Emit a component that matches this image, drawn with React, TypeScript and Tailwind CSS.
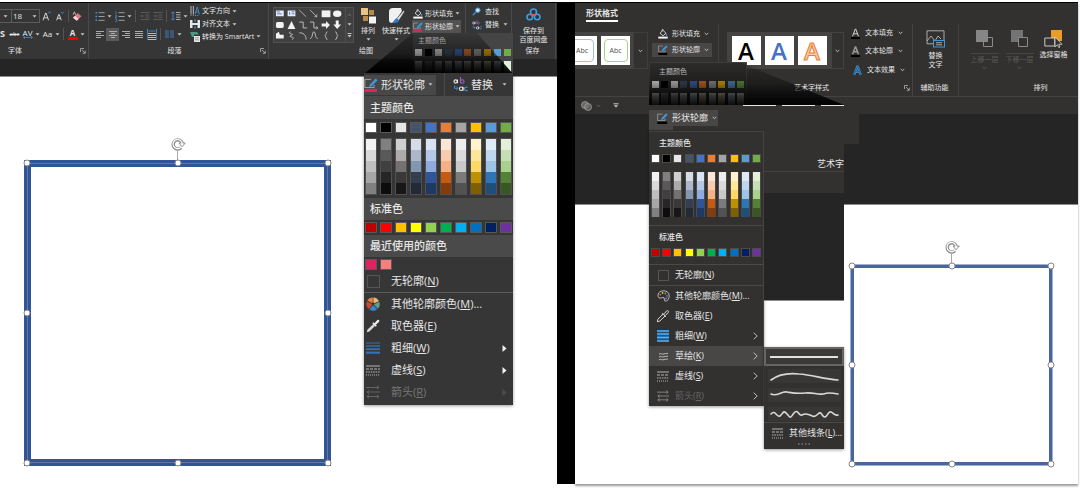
import type { ReactNode } from 'react'

const THEME = [
  ['#ffffff', '#f2f2f2', '#d9d9d9', '#bfbfbf', '#a6a6a6', '#808080'],
  ['#000000', '#808080', '#595959', '#404040', '#262626', '#0d0d0d'],
  ['#e7e6e6', '#d0cece', '#aeaaaa', '#767171', '#3b3838', '#181717'],
  ['#44546a', '#d6dce5', '#adb9ca', '#8497b0', '#333f50', '#222a35'],
  ['#4472c4', '#dae3f3', '#b4c7e7', '#8faadc', '#2f5597', '#203864'],
  ['#ed7d31', '#fbe5d6', '#f8cbad', '#f4b183', '#c55a11', '#843c0c'],
  ['#a5a5a5', '#ededed', '#dbdbdb', '#c9c9c9', '#7b7b7b', '#525252'],
  ['#ffc000', '#fff2cc', '#ffe699', '#ffd966', '#bf9000', '#7f6000'],
  ['#5b9bd5', '#deebf7', '#bdd7ee', '#9dc3e6', '#2e75b6', '#1f4e79'],
  ['#70ad47', '#e2f0d9', '#c5e0b4', '#a9d18e', '#548235', '#385723'],
]

const STANDARD = [
  '#c00000', '#ff0000', '#ffc000', '#ffff00', '#92d050',
  '#00b050', '#00b0f0', '#0070c0', '#002060', '#7030a0',
]

const RECENT = ['#dc2460', '#f97e7e']

/* ---------- small shared pieces ---------- */

function Icon({ w = 12, h = 12, children }: { w?: number; h?: number; children: ReactNode }) {
  return (
    <svg width={w} height={h} viewBox={`0 0 ${w} ${h}`} fill="none" className="shrink-0" aria-hidden="true">
      {children}
    </svg>
  )
}

function Caret() {
  return (
    <Icon w={5} h={3}>
      <path d="M0.5 0.3h4L2.5 2.6z" fill="#c8c8c8" />
    </Icon>
  )
}

function Chevron({ color = '#d0d0d0' }: { color?: string }) {
  return (
    <Icon w={5} h={4}>
      <path d="M0.7 0.9l1.8 1.8L4.3 0.9" stroke={color} strokeWidth="0.9" />
    </Icon>
  )
}

function CaretCell() {
  return (
    <button aria-label="更多" className="flex h-3 w-[7px] items-center justify-center">
      <Caret />
    </button>
  )
}

function Cell({ label, active, children }: { label: string; active?: boolean; children: ReactNode }) {
  return (
    <button
      aria-label={label}
      className={`flex h-[13px] w-[13px] shrink-0 items-center justify-center ${active ? 'bg-[#5a5a5a]' : ''}`}
    >
      {children}
    </button>
  )
}

function Divider() {
  return <span className="mx-[2px] h-3 w-px shrink-0 bg-[#545454]" />
}

function Launcher() {
  return (
    <button aria-label="对话框启动器">
      <Icon w={6} h={6}>
        <path d="M0.5 4V0.5H4M2 2l3 3M5.3 2.7v2.6H2.7" stroke="#b5b5b5" strokeWidth="0.8" />
      </Icon>
    </button>
  )
}

function Key({ text, letter, tail = '' }: { text: string; letter: string; tail?: string }) {
  return (
    <span>
      {text}(<u>{letter}</u>){tail}
    </span>
  )
}

/* ---------- icons ---------- */

function Lines({ kind }: { kind: 'left' | 'center' | 'right' | 'justify' }) {
  const short = { left: 'M1 4.5h5M1 8.5h5', center: 'M3 4.5h4M3 8.5h4', right: 'M4 4.5h5M4 8.5h5', justify: 'M1 4.5h8M1 8.5h8' }
  return (
    <Icon w={10} h={10}>
      <path d={`M1 2.5h8M1 6.5h8${short[kind]}`} stroke="#b8b8b8" strokeWidth="0.9" />
    </Icon>
  )
}

function BulletIcon({ numbered }: { numbered?: boolean }) {
  return (
    <Icon w={10} h={11}>
      {numbered ? (
        <path d="M1 0.5v3M0.3 4.6h1.4v1.2H.3v1.2h1.4M.3 8h1.4v2.6H.3" stroke="#3f8fd6" strokeWidth="0.8" />
      ) : (
        <path d="M0.5 1.7h1.6M0.5 5.5h1.6M0.5 9.3h1.6" stroke="#3f8fd6" strokeWidth="1.6" />
      )}
      <path d="M3.6 1.7h6M3.6 5.5h6M3.6 9.3h6" stroke="#a9a9a9" strokeWidth="0.9" />
    </Icon>
  )
}

function IndentIcon({ flip }: { flip?: boolean }) {
  return (
    <Icon w={10} h={10}>
      <path d="M0.5 1.5h9M5 4h4.5M5 6.2h4.5M0.5 8.5h9" stroke="#5f5f5f" strokeWidth="0.9" />
      <path d={flip ? 'M0.5 5h3M2.2 3.6L3.8 5 2.2 6.4' : 'M4 5H1M2.3 3.6L0.7 5l1.6 1.4'} stroke="#5f5f5f" strokeWidth="0.8" />
    </Icon>
  )
}

function FillIcon() {
  return (
    <Icon w={10} h={10}>
      <path d="M2 4.2L5 1.3l3 2.9-2.9 2.6z" stroke="#e0e0e0" strokeWidth="0.9" />
      <path d="M4 2.6V.6h1.5" stroke="#e0e0e0" strokeWidth="0.7" />
      <path d="M8.5 4.3c.8 1 .9 1.5.9 1.8a.8.8 0 01-1.6 0c0-.4.2-.9.7-1.8z" fill="#3f8fd6" />
      <path d="M0.3 7.6h9.4v2H.3z" fill="#f5f5f5" />
    </Icon>
  )
}

function PenIcon({ bar, size = 11 }: { bar: string; size?: number }) {
  return (
    <svg width={size} height={size} viewBox="0 0 12 12" fill="none" className="shrink-0" aria-hidden="true">
      <path d="M6 1.2H0.7v7h8V6" stroke="#a8a8a8" strokeWidth="0.8" />
      <path d="M10 0.4l1.6 1.6-5 5-2.3.9.8-2.4z" fill="#3f97dc" />
      <path d="M0.3 9.4h10.8V12H.3z" fill={bar} />
    </svg>
  )
}

function ReplaceIcon({ size = 10 }: { size?: number }) {
  return (
    <svg width={size} height={size} viewBox="0 0 14 14" fill="none" className="shrink-0" aria-hidden="true">
      <circle cx="2.4" cy="4.2" r="1.5" stroke="#e8e8e8" strokeWidth="1" />
      <path d="M4.2 2.4v3.4" stroke="#e8e8e8" strokeWidth="1" />
      <circle cx="8.7" cy="4.2" r="1.6" stroke="#9a5fc4" strokeWidth="1" />
      <path d="M7 0v5.8" stroke="#9a5fc4" strokeWidth="1" />
      <circle cx="7.6" cy="11" r="1.6" stroke="#e8e8e8" strokeWidth="1" />
      <path d="M9.4 9.2v3.6" stroke="#e8e8e8" strokeWidth="1" />
      <path d="M13.6 9.8a1.7 1.7 0 100 2.4" stroke="#3f8fd6" strokeWidth="1" />
      <path d="M1.500 8v2.600h3M3.200 9l1.600 1.600L3.200 12" stroke="#3f8fd6" strokeWidth="0.9" />
    </svg>
  )
}

function WeightIcon({ tone }: { tone: string }) {
  return (
    <Icon w={14} h={12}>
      <path d="M0 1h14" stroke={tone} strokeWidth="1" />
      <path d="M0 4h14" stroke={tone} strokeWidth="1.4" />
      <path d="M0 7.2h14" stroke={tone} strokeWidth="1.8" />
      <path d="M0 10.7h14" stroke={tone} strokeWidth="2.2" />
    </Icon>
  )
}

function BlockWeightIcon() {
  return (
    <Icon w={12} h={12}>
      <path d="M0 0h12v12H0z" fill="#2b7fc4" />
      <path d="M0 1h12M0 4h12M0 7.500h12M0 11h12" stroke="#5ab0ee" strokeWidth="1" />
      <path d="M0 2.500h12M0 5.700h12M0 9.300h12" stroke="#323130" strokeWidth="0.7" />
    </Icon>
  )
}

function DashIcon({ w = 14 }: { w?: number }) {
  return (
    <Icon w={w} h={11}>
      <path d={`M0 1h${w}`} stroke="#c4c4c4" strokeWidth="0.9" />
      <path d={`M0 4h${w}`} stroke="#c4c4c4" strokeWidth="0.9" strokeDasharray="3 1" />
      <path d={`M0 7h${w}`} stroke="#c4c4c4" strokeWidth="0.9" strokeDasharray="1.6 0.8" />
      <path d={`M0 10h${w}`} stroke="#c4c4c4" strokeWidth="0.9" strokeDasharray="1 1" />
    </Icon>
  )
}

function ArrowsIcon({ color, w = 14 }: { color: string; w?: number }) {
  return (
    <svg width={w} height={w} viewBox="0 0 14 14" fill="none" className="shrink-0" aria-hidden="true">
      <path
        d="M0 2.5h13M11 .7l2 1.8-2 1.8M1 7h13M3 5.2L1 7l2 1.8M1 11.5h12M3 9.7l-2 1.8 2 1.8M11 9.7l2 1.8-2 1.8"
        stroke={color}
        strokeWidth="0.9"
      />
    </svg>
  )
}

function DropperIcon({ outline }: { outline?: boolean }) {
  return (
    <Icon w={14} h={14}>
      {outline ? (
        <path
          d="M1.3 12.7l.6-2.4 5.2-5.4 2 2-5.3 5.2zM6.2 4l3.8 3.8M8.2 4.8l2.4-2.9c1.3-.8 2.5.3 1.7 1.7L9.4 6.2"
          stroke="#d8d8d8"
          strokeWidth="1"
        />
      ) : (
        <>
          <path d="M0.8 13.2l.8-2.6 5.8-5.7 1.8 1.8-5.8 5.7z" fill="#d9d9d9" />
          <path d="M6.3 4.2l1-.9 3.5 3.5-1 .9zM8.4 4.2l3-3.2c1.3-.8 2.4.3 1.7 1.7L9.9 5.8z" fill="#efefef" />
        </>
      )}
    </Icon>
  )
}

function WheelIcon() {
  return (
    <Icon w={14} h={14}>
      <path d="M6.8 6.6V.4A6.5 6.5 0 001.2 3.6z" fill="#e8803c" />
      <path d="M7.4 6.6V.4A6.5 6.5 0 0113 4.2z" fill="#e9b872" />
      <path d="M7.6 7.2l5.8-2.1a6.5 6.5 0 01-1.5 6.6z" fill="#5fa08a" />
      <path d="M7.1 7.7l4.1 4.6a6.5 6.5 0 01-7.8.3z" fill="#3b82d0" />
      <path d="M6.5 7.3L3 12A6.5 6.5 0 01.9 4.5z" fill="#d2482f" />
      <circle cx="7" cy="7" r="1.4" fill="#363636" />
    </Icon>
  )
}

function PaletteIcon() {
  return (
    <Icon w={13} h={12}>
      <path
        d="M6.7.8c3.2 0 5.5 2 5.5 5s-1.6 5.3-3.6 5.3c-2.2 0-.5-2.4-1.6-3.3-1.3-1-3.2.9-5 .1C.4 7-.1 1 6.7.8z"
        stroke="#c9c9c9"
        strokeWidth="0.9"
      />
      <circle cx="3.3" cy="4.7" r="0.9" fill="#e05a4a" />
      <circle cx="5.6" cy="3" r="0.9" fill="#eab54c" />
      <circle cx="8.4" cy="3.4" r="0.9" fill="#67b36a" />
      <circle cx="9.9" cy="5.8" r="0.9" fill="#3f97dc" />
      <circle cx="9" cy="8.4" r="0.9" fill="#a876c9" />
    </Icon>
  )
}

function SketchIcon() {
  return (
    <Icon w={11} h={9}>
      <path d="M1 2.2c2-1.6 3 .8 5-.2s2 .2 4-.8M1 5c2-1.6 3 .8 5-.2s2 .2 4-.8M1 7.8c2-1.6 3 .8 5-.2s2 .2 4-.8" stroke="#c9c9c9" strokeWidth="0.9" />
    </Icon>
  )
}

function RotateHandle() {
  return (
    <Icon w={16} h={14}>
      <path d="M11 10.800A4.600 4.600 0 1112.300 6.500" stroke="#919191" strokeWidth="3.400" />
      <path d="M9 6h6.300L12 9.800z" fill="#fff" stroke="#919191" strokeWidth="1" />
      <path d="M10.700 10.500A4.600 4.600 0 1112.200 7" stroke="#fff" strokeWidth="1.200" />
    </Icon>
  )
}

/* ---------- swatches ---------- */

function SwatchRow({ colors, large }: { colors: string[]; large?: boolean }) {
  return (
    <div className={large ? 'flex gap-[3px] px-px' : 'flex justify-between px-[2px]'}>
      {colors.map((color) => (
        <button
          key={color}
          aria-label={color}
          className={large ? 'h-[11px] w-3 border border-[#585858]' : 'h-[9px] w-[9px] border border-[#4c4b4a]'}
          style={{ backgroundColor: color }}
        />
      ))}
    </div>
  )
}

function ShadeColumns({ large }: { large?: boolean }) {
  return (
    <div className={large ? 'flex gap-[3px] px-px' : 'flex justify-between px-[2px]'}>
      {THEME.map(([base, ...shades]) => (
        <div key={base} className={large ? 'w-3 border border-[#505050]' : 'w-[9px] border-x border-[#4c4b4a]'}>
          {shades.map((shade) => (
            <button
              key={shade}
              aria-label={shade}
              className={large ? 'block h-[11px] w-full' : 'block h-[9px] w-full'}
              style={{ backgroundColor: shade }}
            />
          ))}
        </div>
      ))}
    </div>
  )
}

function PreviewSwatches() {
  return (
    <>
      <div className="flex justify-between px-[2px]">
        {THEME.map(([base]) => (
          <span key={base} className="h-[7px] w-[7px]" style={{ backgroundColor: base }} />
        ))}
      </div>
      <div className="mt-[5px] flex justify-between px-[2px]">
        {THEME.map(([base, shade]) => (
          <span key={base} className="h-3 w-[7px]" style={{ backgroundColor: shade }} />
        ))}
      </div>
    </>
  )
}

/* ---------- selected shape on the slide ---------- */

function SelectedShape({ thick }: { thick?: boolean }) {
  const handle =
    'absolute h-[7px] w-[7px] -translate-x-1/2 -translate-y-1/2 rounded-full border border-[#858585] bg-white'
  return (
    <div
      className={
        thick
          ? 'h-[306px] w-[307px] bg-[#2f5597] p-[3px]'
          : 'h-[202px] w-[203px] bg-[#4a659c] p-[2px] outline-1 -outline-offset-1 outline-[#9fb0d0]'
      }
    >
      <div className={thick ? 'relative h-full bg-[#2f5597] p-[4px] outline-1 -outline-offset-1 outline-[#64789c]' : 'relative h-full p-[2px]'}>
        <div className="h-full bg-white" />
        <div className="absolute bottom-full left-1/2 flex -translate-x-1/2 flex-col items-center">
          <RotateHandle />
          <span className="h-3 w-px bg-[#a8a8a8]" />
        </div>
        <span className={`${handle} left-0 top-0`} />
        <span className={`${handle} left-1/2 top-0`} />
        <span className={`${handle} left-full top-0`} />
        <span className={`${handle} left-0 top-1/2`} />
        <span className={`${handle} left-full top-1/2`} />
        <span className={`${handle} left-0 top-full`} />
        <span className={`${handle} left-1/2 top-full`} />
        <span className={`${handle} left-full top-full`} />
      </div>
    </div>
  )
}

/* ---------- left window ---------- */

function GroupLabel({ children, launcher }: { children: ReactNode; launcher?: boolean }) {
  return (
    <div className="flex h-4 items-center pr-[2px]">
      <span className="flex-1 text-center">{children}</span>
      {launcher && <Launcher />}
    </div>
  )
}

function FontGroup() {
  return (
    <section className="flex w-[89px] shrink-0 flex-col border-r border-[#4a4a4a] pt-1">
      <div className="flex h-[18px] items-center">
        <button aria-label="字体" className="flex h-[14px] w-[11px] items-center justify-center border-y border-[#5c5c5c]">
          <Caret />
        </button>
        <label className="flex h-[14px] w-[29px] items-center border border-[#5c5c5c] pr-[2px]">
          <select aria-label="字号" className="w-full appearance-none bg-transparent pl-px text-[8px] leading-3">
            <option>18</option>
          </select>
          <Caret />
        </label>
        <Cell label="增大字号">
          <Icon w={9} h={10}>
            <path d="M1 9.3L3.6 2h.4l2.6 7.3M2 6.8h3.7" stroke="#d4d4d4" />
            <path d="M6 2.4L7.5.7 9 2.4" stroke="#3f8fd6" strokeWidth="0.9" />
          </Icon>
        </Cell>
        <Cell label="减小字号">
          <Icon w={9} h={10}>
            <path d="M1.6 9.3L3.8 3.4h.3l2.2 5.9M2.5 7.3h2.9" stroke="#d4d4d4" />
            <path d="M6 .9l1.4 1.5L8.8.9" stroke="#3f8fd6" strokeWidth="0.9" />
          </Icon>
        </Cell>
        <Divider />
        <Cell label="清除格式">
          <Icon w={11} h={11}>
            <path d="M1 6.7l4.8-4.8 3.6 3.3-4.6 4.6z" fill="#d9788a" />
            <path d="M1 6.7L3 4.8l3.6 3.2-1.8 1.8z" fill="#f2d5da" />
            <path d="M1 3.8L2.4.8l1.3 3" stroke="#d4d4d4" strokeWidth="0.8" />
          </Icon>
        </Cell>
      </div>
      <div className="flex h-[18px] items-center">
        <button className="w-2 text-left text-[9px] leading-3 font-bold">S</button>
        <button className="w-[13px] text-center text-[6px] leading-3 line-through">abc</button>
        <button aria-label="字符间距" className="flex w-[13px] flex-col items-center">
          <span className="text-[8px] leading-[7px]">AV</span>
          <Icon w={10} h={3}>
            <path d="M0.5 1.5h9M2 .2L.5 1.5 2 2.8M8 .2l1.5 1.3L8 2.8" stroke="#3f8fd6" strokeWidth="0.8" />
          </Icon>
        </button>
        <CaretCell />
        <button className="w-[13px] text-center text-[8px] leading-3">Aa</button>
        <CaretCell />
        <Divider />
        <button className="flex w-[13px] flex-col items-center text-[8px] leading-[9px] font-bold">
          A
          <span className="h-[3px] w-[10px] bg-[#f00000]" />
        </button>
        <CaretCell />
      </div>
      <div className="flex h-4 items-center justify-between pr-[2px]">
        <span className="pl-2">字体</span>
        <Launcher />
      </div>
    </section>
  )
}

function ParagraphGroup() {
  return (
    <section className="flex w-[180px] shrink-0 flex-col border-r border-[#4a4a4a] pt-[2px]">
      <div className="flex h-[38px]">
        <div className="w-[101px] pt-[2px] pl-1">
          <div className="flex h-[18px] items-center">
            <Cell label="项目符号"><BulletIcon /></Cell>
            <CaretCell />
            <Cell label="编号"><BulletIcon numbered /></Cell>
            <CaretCell />
            <Divider />
            <Cell label="减少缩进"><IndentIcon /></Cell>
            <Cell label="增加缩进"><IndentIcon flip /></Cell>
            <Divider />
            <Cell label="行距">
              <Icon w={10} h={10}>
                <path d="M2 .8v8.4M.5 2.4L2 .8l1.5 1.6M.5 7.6L2 9.2l1.5-1.6" stroke="#3f8fd6" strokeWidth="0.9" />
                <path d="M5 1.5h4.5M5 3.8h4.5M5 6.2h4.5M5 8.5h4.5" stroke="#b8b8b8" strokeWidth="0.9" />
              </Icon>
            </Cell>
            <CaretCell />
          </div>
          <div className="flex h-[18px] items-center">
            <Cell label="左对齐"><Lines kind="left" /></Cell>
            <Cell label="居中" active><Lines kind="center" /></Cell>
            <Cell label="右对齐"><Lines kind="right" /></Cell>
            <Cell label="两端对齐"><Lines kind="justify" /></Cell>
            <Cell label="分散对齐">
              <Icon w={10} h={11}>
                <path d="M0.5 0v4M9.5 0v4M1.5 2h7" stroke="#3f8fd6" strokeWidth="0.9" />
                <path d="M1 4.5h8M1 6.5h8M1 8.5h8M1 10.5h8" stroke="#c9c9c9" strokeWidth="0.9" />
                <path d="M.5 4v7M9.5 4v7" stroke="#3f8fd6" strokeWidth="0.7" />
              </Icon>
            </Cell>
            <Divider />
            <Cell label="分栏">
              <Icon w={9} h={8}>
                <path d="M0 1h4M0 3h4M0 5h4M0 7h4M5 1h4M5 3h4M5 5h4M5 7h4" stroke="#3f78b4" strokeWidth="1" />
              </Icon>
            </Cell>
            <CaretCell />
          </div>
        </div>
        <div className="flex flex-col">
          <button className="flex h-[13px] items-center gap-[2px]">
            <Icon w={10} h={10}>
              <path d="M1 0v8.5M3.3 0v8.5M1 9.3v.7M3.3 9.3v.7M5.6 9.3v.7M7.9 9.3v.7" stroke="#c9c9c9" strokeWidth="0.9" />
              <path d="M5 8.5L7.2 1l2.3 7.5M5.6 6h3.2" stroke="#3f8fd6" strokeWidth="0.9" />
            </Icon>
            文字方向
            <Caret />
          </button>
          <button className="flex h-[13px] items-center gap-[2px]">
            <Icon w={10} h={10}>
              <path d="M0 1h2.5v8H0zM7.5 1H10v8H7.5zM2.5 4h5v2h-5z" fill="#e6e6e6" />
              <path d="M5 0v3M5 10V7" stroke="#3f8fd6" />
            </Icon>
            对齐文本
            <Caret />
          </button>
          <button className="flex h-[13px] items-center gap-[2px] whitespace-nowrap">
            <Icon w={10} h={10}>
              <path d="M0 0h7l2 2.5H4V5H2z" fill="#4a9b80" />
              <path d="M4 4h6v6H4z" fill="#e6e6e6" />
              <path d="M5 5.8h4M5 7.8h4" stroke="#666" strokeWidth="0.6" />
            </Icon>
            转换为 SmartArt
            <Caret />
          </button>
        </div>
      </div>
      <GroupLabel launcher>段落</GroupLabel>
    </section>
  )
}

function ShapeGallery() {
  return (
    <div className="flex h-[36px] w-[81px] border border-[#505050] bg-[#404040]">
      <svg viewBox="0 0 73 34" className="h-full flex-1" fill="none" role="img" aria-label="形状">
        <path d="M2 2h8v6H2zM14 2h8v6h-8z" fill="#e8eef5" />
        <path d="M3 3.5h3M3 5.5h5M16 3.5v3M18 3.5h3M18 5.5h3" stroke="#3f78c0" strokeWidth="0.9" />
        <path d="M26 1.5l7 7M37 1.5l7 7M44 6v2.5h-2.5" stroke="#c9c9c9" strokeWidth="0.8" />
        <path d="M49 2h9v7h-9z" fill="#f2f2f2" />
        <ellipse cx="65" cy="5.5" rx="4.3" ry="3.3" fill="#f2f2f2" />
        <rect x="2" y="14" width="8" height="6" rx="1.6" fill="#f2f2f2" />
        <path d="M18 13l4 8h-8z" fill="#f2f2f2" />
        <path d="M26 14h4v6h4M37 14h4v6h4M43.5 18.5L45 20l-1.5 1.5" stroke="#c9c9c9" strokeWidth="0.9" />
        <path d="M49 15.5h4.5V13l4 4-4 4v-2.5h-4.5zM63.5 12.5h3v4H69l-4 4.5-4-4.5h2.5z" fill="#f2f2f2" />
        <path d="M2 31v-5l3-2 1 3h4v4z" fill="#f2f2f2" />
        <path d="M17 24c-4 2 3 2 2 3s-4 1-2 2 4 0 2 3M26 25c4 0 7 2 7 7M37 31c3 0 2-7 4-7s1 7 4 7M55 24c-2 0-1 3-2.5 4 1.5 1 .5 4 2.5 4M63 24c2 0 1 3 2.5 4-1.5 1-.5 4-2.5 4" stroke="#c9c9c9" strokeWidth="0.9" />
      </svg>
      <div className="flex w-2 flex-col items-center justify-around border-l border-[#505050] py-px">
        <Icon w={5} h={3}><path d="M.5 2.5h4L2.5.5z" fill="#686868" /></Icon>
        <Caret />
        <Icon w={5} h={5}><path d="M.5.5h4" stroke="#c8c8c8" /><path d="M.5 2h4l-2 2.5z" fill="#c8c8c8" /></Icon>
      </div>
    </div>
  )
}

function DrawingGroup() {
  return (
    <section className="flex w-[197px] shrink-0 flex-col border-r border-[#4a4a4a] pt-1">
      <div className="flex h-9">
        <div className="pl-1">
          <ShapeGallery />
        </div>
        <button className="flex w-7 flex-col items-center">
          <Icon w={15} h={17}>
            <path d="M0 1h7v7H0z" fill="#e9c487" />
            <path d="M8 3h5v5H8zM2 9h5v5H2z" fill="#b88a48" />
            <path d="M8 9.5h7v7H8z" fill="#f2f2f2" />
          </Icon>
          <span className="leading-[14px]">排列</span>
          <Caret />
        </button>
        <button className="flex w-7 flex-col items-center">
          <Icon w={17} h={17}>
            <path d="M1 5a4 4 0 014-4h8l1 3-5 8-5 4H4a3 3 0 01-3-3z" fill="#f0f0f0" />
            <path d="M15.5 3.500l1.200 1-5.800 9-2.400-1.600z" fill="#dbe3ea" stroke="#363636" strokeWidth="0.6" />
            <path d="M8.800 11.300l2.500 2.400c-2 2.500-4.800 2.800-7.300 2 2-.4 1.900-3.400 4.800-4.400z" fill="#3279c8" />
          </Icon>
          <span className="leading-[14px] whitespace-nowrap">快速样式</span>
          <Caret />
        </button>
        <div className="flex flex-col pl-[2px]">
          <button className="flex h-[13px] w-[49px] items-center gap-[2px] pl-px whitespace-nowrap">
            <FillIcon />
            形状填充
            <Caret />
          </button>
          <button className="flex h-[13px] w-[49px] items-center gap-[2px] bg-[#525252] pl-px whitespace-nowrap">
            <PenIcon bar="#dc2460" size={10} />
            形状轮廓
            <Caret />
          </button>
        </div>
      </div>
      <GroupLabel>绘图</GroupLabel>
    </section>
  )
}

/* lower part of the drop-down fading into the enlarged menu */
function LeftPreview() {
  return (
    <>
      <div className="absolute top-[31px] left-[413px] h-10 w-[100px] overflow-hidden bg-[#454545]">
        <div className="flex h-4 items-center pl-[5px]">主题颜色</div>
        <PreviewSwatches />
      </div>
      <svg className="absolute top-[31px] left-[364px]" width="149" height="41" viewBox="0 0 149 41" aria-hidden="true">
        <defs>
          <linearGradient id="fadeLeft" x1="0" y1="0" x2="0" y2="1">
            <stop offset="0" stopColor="#000" stopOpacity="0.2" />
            <stop offset="0.5" stopColor="#000" stopOpacity="0.5" />
            <stop offset="0.75" stopColor="#000" stopOpacity="0.85" />
            <stop offset="1" stopColor="#000" />
          </linearGradient>
        </defs>
        <path d="M49 0h64l36 41H0z" fill="url(#fadeLeft)" />
      </svg>
    </>
  )
}

function MenuHeading({ children }: { children: ReactNode }) {
  return <h3 className="flex h-[22px] items-center bg-[#4a4a4a] pl-[6px] font-medium">{children}</h3>
}

function LeftItem({ icon, children, arrow, disabled }: { icon: ReactNode; children: ReactNode; arrow?: boolean; disabled?: boolean }) {
  return (
    <button
      role="menuitem"
      disabled={disabled}
      className={`flex h-[22px] w-full items-center pr-[6px] pl-[2px] ${disabled ? 'text-[#777777]' : ''}`}
    >
      <span className="flex w-[25px]">{icon}</span>
      <span className="flex-1 text-left">{children}</span>
      {arrow && (
        <Icon w={5} h={7}>
          <path d="M0.5 0l4 3.5-4 3.5z" fill={disabled ? '#4d4d4d' : '#f2f2f2'} />
        </Icon>
      )}
    </button>
  )
}

function LeftMenu() {
  return (
    <div
      role="menu"
      className="absolute top-[71px] left-[364px] w-[149px] bg-[#363636] pb-[2px] text-[11px] leading-[14px] shadow-[0_1px_3px_rgba(0,0,0,0.4)]"
    >
      <div className="flex h-6 items-center border-b border-[#4a4a4a]">
        <button className="flex h-5 w-[72px] items-center gap-[3px] bg-[#484848] whitespace-nowrap">
          <PenIcon bar="#dc2460" size={14} />
          形状轮廓
          <Caret />
        </button>
        <span className="ml-2 h-full w-px bg-[#4a4a4a]" />
        <button className="flex h-5 flex-1 items-center gap-[3px] pl-2">
          <ReplaceIcon size={15} />
          替换
          <span className="pl-[6px]"><Caret /></span>
        </button>
      </div>
      <MenuHeading>主题颜色</MenuHeading>
      <div className="py-[3px]">
        <SwatchRow large colors={THEME.map((c) => c[0])} />
        <div className="h-[5px]" />
        <ShadeColumns large />
      </div>
      <MenuHeading>标准色</MenuHeading>
      <div className="py-[2px]">
        <SwatchRow large colors={STANDARD} />
      </div>
      <MenuHeading>最近使用的颜色</MenuHeading>
      <div className="pt-[2px]">
        <SwatchRow large colors={RECENT} />
      </div>
      <LeftItem icon={<span className="ml-px h-[13px] w-[13px] border border-[#555555]" />}>
        <Key text="无轮廓" letter="N" />
      </LeftItem>
      <hr className="border-[#5a5a5a]" />
      <LeftItem icon={<WheelIcon />}><Key text="其他轮廓颜色" letter="M" tail="..." /></LeftItem>
      <LeftItem icon={<DropperIcon />}><Key text="取色器" letter="E" /></LeftItem>
      <LeftItem arrow icon={<WeightIcon tone="#3470b4" />}><Key text="粗细" letter="W" /></LeftItem>
      <LeftItem arrow icon={<DashIcon />}><Key text="虚线" letter="S" /></LeftItem>
      <LeftItem arrow disabled icon={<ArrowsIcon color="#6a6a6a" />}><Key text="箭头" letter="R" /></LeftItem>
    </div>
  )
}

function LeftWindow() {
  return (
    <article className="relative flex min-w-0 flex-col bg-white">
      <header className="flex h-[57px] overflow-hidden border-t border-black bg-[#363636]">
        <FontGroup />
        <ParagraphGroup />
        <DrawingGroup />
        <section className="flex w-[46px] shrink-0 flex-col border-r border-[#4a4a4a] pt-[2px] pl-[6px]">
          <button className="flex h-[13px] items-center gap-1">
            <Icon w={9} h={9}>
              <circle cx="5.8" cy="3.2" r="2.3" fill="#cfe4f7" stroke="#3f8fd6" />
              <path d="M4 5L.8 8.2" stroke="#3f8fd6" strokeWidth="1.4" />
            </Icon>
            查找
          </button>
          <button className="flex h-[13px] items-center gap-[3px]">
            <ReplaceIcon />
            替换
            <CaretCell />
          </button>
        </section>
        <section className="flex w-11 shrink-0 flex-col border-r border-[#4a4a4a] pt-[5px] text-center">
          <button className="flex h-[35px] flex-col items-center leading-[9px]">
            <Icon w={15} h={13}>
              <circle cx="7.5" cy="4" r="3" stroke="#3aa0e0" strokeWidth="1.6" />
              <circle cx="3.8" cy="9" r="2.8" stroke="#3aa0e0" strokeWidth="1.6" />
              <circle cx="11.2" cy="9" r="2.8" stroke="#3aa0e0" strokeWidth="1.6" />
              <path d="M5 6a3 3 0 005 0" stroke="#e8505b" strokeWidth="2" />
            </Icon>
            <span className="pt-[5px]">保存到<br />百度网盘</span>
          </button>
          <GroupLabel>保存</GroupLabel>
        </section>
      </header>
      <div className="h-[18px] border-b border-[#8a8a8a] bg-[#252525]" />
      <main className="flex-1 pt-[83px] pl-6">
        <SelectedShape thick />
      </main>
      <LeftPreview />
      <LeftMenu />
    </article>
  )
}

/* ---------- right window ---------- */

function StyleCard({ tone }: { tone: 'blue' | 'green' }) {
  return (
    <button className={`flex h-[29px] shrink-0 items-center bg-white ${tone === 'blue' ? 'w-[22px] justify-end overflow-hidden pr-[3px]' : 'w-[29px] justify-center'}`}>
      <span
        className={`flex h-[23px] w-6 shrink-0 items-center justify-center rounded-[4px] border text-[7px] text-[#505050] ${
          tone === 'blue' ? 'border-[#9dc3e6]' : 'border-[#a9d18e]'
        }`}
      >
        Abc
      </span>
    </button>
  )
}

function WordArt({ tone }: { tone: string }) {
  return (
    <button className={`flex h-[29px] w-[29px] items-center justify-center bg-white text-[24px] leading-[29px] font-semibold ${tone}`}>
      A
    </button>
  )
}

function TextButton({ bar, hollow, children }: { bar?: boolean; hollow?: boolean; children: ReactNode }) {
  return (
    <button className="flex h-[18px] items-center gap-[5px] whitespace-nowrap">
      <Icon w={9} h={11}>
        {bar ? (
          <>
            <path d="M1.5 8.3L4.3 1h.4l2.8 7.3M2.6 5.8h3.8" stroke={hollow ? '#9a9a9a' : '#d4d4d4'} strokeWidth={hollow ? 1.5 : 1} />
            <path d="M0 9h9v2H0z" fill="#000" />
          </>
        ) : (
          <>
            <path d="M1.2 9.8L4.2 1.5h.6l3 8.3M2.5 6.8h4" stroke="#3f97dc" strokeWidth="2.2" />
            <path d="M1.2 9.8L4.2 1.5h.6l3 8.3M2.5 6.8h4" stroke="#20486b" strokeWidth="0.7" />
          </>
        )}
      </Icon>
      {children}
      <Chevron />
    </button>
  )
}

function LayerButton({ front, children }: { front?: boolean; children: ReactNode }) {
  return (
    <button disabled className="flex w-[35px] flex-col items-center text-[#5c5b5a]">
      <Icon w={19} h={19}>
        {front ? (
          <>
            <path d="M8.5 8.5h9v9h-9z" stroke="#8a8a8a" />
            <path d="M1 1h12v12H1z" fill="#868686" />
          </>
        ) : (
          <>
            <path d="M1 1h12v12H1z" fill="#747474" />
            <path d="M8.5 8.5h9v9h-9z" fill="#323130" stroke="#8a8a8a" />
          </>
        )}
      </Icon>
      <span className="mt-[5px] h-px w-7 bg-[#484746]" />
      <span className="leading-[12px] whitespace-nowrap">{children}</span>
      <Chevron color="#5c5b5a" />
    </button>
  )
}

function RightRibbon() {
  return (
    <div className="flex h-[73px] border-b border-[#444342]">
      <section className="flex w-[73px] shrink-0 pt-2">
        <div className="flex h-[37px] w-[58px] items-center gap-1 bg-[#444342]">
          <StyleCard tone="blue" />
          <StyleCard tone="green" />
        </div>
        <button aria-label="更多样式" className="flex h-[37px] w-[15px] items-center justify-center border border-[#3f3e3d]">
          <Chevron />
        </button>
      </section>
      <section className="flex w-[71px] shrink-0 flex-col border-r border-[#444342] pt-px pl-1">
        <button className="flex h-[18px] w-[60px] items-center gap-1 pl-[6px] whitespace-nowrap">
          <FillIcon />
          形状填充
          <Chevron />
        </button>
        <button className="flex h-[14px] w-[60px] items-center gap-1 bg-[#484746] pl-[6px] whitespace-nowrap">
          <PenIcon bar="#000" size={10} />
          形状轮廓
          <Chevron />
        </button>
      </section>
      <section className="flex w-[194px] shrink-0 flex-col border-r border-[#444342]">
        <div className="flex flex-1">
          <div className="mt-2 ml-2 flex h-[37px] w-[104px] items-center justify-center gap-1 bg-[#444342]">
            <WordArt tone="text-black" />
            <WordArt tone="text-[#4472c4]" />
            <WordArt tone="text-[#f8cbad] [-webkit-text-stroke:1px_#ed7d31]" />
          </div>
          <button aria-label="更多艺术字" className="mt-2 flex h-[37px] w-[13px] items-center justify-center border border-[#444342]">
            <Chevron />
          </button>
          <div className="flex flex-col pl-[7px]">
            <TextButton bar>文本填充</TextButton>
            <TextButton bar hollow>文本轮廓</TextButton>
            <div className="pt-px pl-[2px]">
              <TextButton>文本效果</TextButton>
            </div>
          </div>
        </div>
        <GroupLabel launcher>艺术字样式</GroupLabel>
      </section>
      <section className="flex w-[46px] shrink-0 flex-col border-r border-[#444342] text-center">
        <button className="flex flex-1 flex-col items-center pt-[6px] leading-[9px]">
          <Icon w={19} h={18}>
            <path d="M1 .8h17v13H1zM1 11l4-5 4 5 3-5 3 3" stroke="#c9c9c9" strokeWidth="0.8" />
            <rect x="7.5" y="10.5" width="11" height="6.5" fill="#323130" stroke="#3f97dc" />
            <path d="M10 12.7h6M10 14.8h6" stroke="#c9c9c9" strokeWidth="0.8" />
          </Icon>
          <span className="pt-[3px]">替换<br />文字</span>
        </button>
        <GroupLabel>辅助功能</GroupLabel>
      </section>
      <section className="flex min-w-0 flex-1 flex-col">
        <div className="flex flex-1 pt-[5px] pl-2">
          <LayerButton front>上移一层</LayerButton>
          <LayerButton>下移一层</LayerButton>
          <button className="flex w-[33px] flex-col items-center">
            <Icon w={19} h={19}>
              <path d="M7 1h11v11H7z" fill="#ee9a26" />
              <path d="M.8 9h10v8H.8z" fill="#323130" stroke="#c9c9c9" />
              <path d="M11 8v10l2.4-2.2 1.4 2.8 1.2-.6-1.3-2.7H18z" fill="#323130" stroke="#d8d8d8" strokeWidth="0.8" />
            </Icon>
            <span className="leading-[13px] whitespace-nowrap">选择窗格</span>
          </button>
        </div>
        <div className="flex h-4 items-center justify-center pl-11">排列</div>
      </section>
    </div>
  )
}

function RightPreview() {
  return (
    <>
      <div className="absolute top-[60px] left-[74px] h-[43px] w-[98px] overflow-hidden border border-b-0 border-[#444342] bg-[#323130]">
        <div className="flex h-[18px] items-center pl-[9px]">主题颜色</div>
        <PreviewSwatches />
      </div>
      <svg className="absolute top-[60px] left-[74px]" width="195" height="44" viewBox="0 0 195 44" aria-hidden="true">
        <defs>
          <linearGradient id="fadeRight" x1="0" y1="0" x2="0" y2="1">
            <stop offset="0" stopColor="#000" stopOpacity="0.1" />
            <stop offset="0.5" stopColor="#000" stopOpacity="0.4" />
            <stop offset="0.8" stopColor="#000" stopOpacity="0.8" />
            <stop offset="1" stopColor="#000" stopOpacity="0.95" />
          </linearGradient>
        </defs>
        <path d="M0 0h90l105 43H0z" fill="url(#fadeRight)" />
        <path d="M94 43.5h33M133 43.5h33M172 43.5h23" stroke="#e6e6e6" />
      </svg>
    </>
  )
}

function RightItem({
  icon,
  children,
  arrow,
  active,
  disabled,
}: {
  icon: ReactNode
  children: ReactNode
  arrow?: boolean
  active?: boolean
  disabled?: boolean
}) {
  return (
    <button
      role="menuitem"
      disabled={disabled}
      className={`flex h-5 w-full items-center pr-[5px] text-[9px] ${active ? 'bg-[#484746]' : ''} ${disabled ? 'text-[#666564]' : ''}`}
    >
      <span className="flex w-[26px] justify-center pl-[2px]">{icon}</span>
      <span className="flex-1 text-left">{children}</span>
      {arrow && (
        <Icon w={5} h={8}>
          <path d="M0.7 0.7L4.2 4 0.7 7.3" stroke="#c8c8c8" strokeWidth="0.9" />
        </Icon>
      )}
    </button>
  )
}

const SKETCHES = [
  'M1 11c8-6 18-7 28-6 14 1 24 5 39 6',
  'M1 6c6 3 10-3 16-2s10 2 18 1 12 2 18 1 4-2 15 0',
  'M1 7c4-5 6 4 9 2s3-7 7-2 3 4 7-1 5 4 8 2 5-1 8 0 4 3 8-1 4 4 7 3 3-6 6-5 3 4 7 3',
]

function SketchMenu() {
  return (
    <div role="menu" className="mt-[46px] w-20 bg-[#323130] shadow-[0_1px_3px_rgba(0,0,0,0.4)]">
      <button role="menuitem" aria-label="直线" className="flex h-[19px] w-full items-center justify-center border-2 border-[#666564] bg-[#3a3938]">
        <span className="h-[2px] w-[68px] bg-[#e0e0e0]" />
      </button>
      <div className="flex flex-col gap-1 pt-[2px] pb-px">
        {SKETCHES.map((d) => (
          <button key={d} role="menuitem" aria-label="手绘线" className="flex h-[15px] items-center justify-center">
            <span className="flex bg-[#383736] px-[2px]">
              <Icon w={69} h={14}>
                <path d={d} stroke="#d8d8d8" strokeWidth="1.6" strokeLinecap="round" />
              </Icon>
            </span>
          </button>
        ))}
      </div>
      <hr className="border-[#4a4948]" />
      <button role="menuitem" className="flex h-5 w-full items-center gap-[6px] pl-2 text-[9px] whitespace-nowrap">
        <DashIcon w={11} />
        <Key text="其他线条" letter="L" tail="..." />
      </button>
      <div className="flex h-[6px] justify-center">
        <Icon w={12} h={2}>
          <path d="M0 1h12" stroke="#a0a0a0" strokeDasharray="1.5 2" />
        </Icon>
      </div>
    </div>
  )
}

function RightMenu() {
  return (
    <div className="absolute top-[103px] left-[74px] text-[8px] leading-[12px]">
      <div className="h-[26px] w-[210px] bg-[#323130] pt-[5px]">
        <button className="flex h-4 w-[69px] items-center gap-1 bg-[#484746] pl-2 whitespace-nowrap">
          <PenIcon bar="#000" size={11} />
          <span className="text-[9px]">形状轮廓</span>
          <Chevron />
        </button>
        <div className="h-1 w-6 bg-[#484746]" />
      </div>
      <div className="flex items-start">
        <div role="menu" className="w-[115px] border-r border-[#444342] bg-[#323130] shadow-[0_1px_3px_rgba(0,0,0,0.4)]">
          <h3 className="flex h-[23px] items-center border-t border-[#444342] pl-[10px] font-medium">主题颜色</h3>
          <SwatchRow colors={THEME.map((c) => c[0])} />
          <div className="h-[9px]" />
          <ShadeColumns />
          <hr className="mt-2 border-[#4a4948]" />
          <h3 className="flex h-[22px] items-center pl-[10px] font-medium">标准色</h3>
          <SwatchRow colors={STANDARD} />
          <hr className="mt-[7px] border-[#4a4948]" />
          <RightItem icon={<span className="h-[11px] w-[11px] border border-[#555453]" />}>
            <Key text="无轮廓" letter="N" />
          </RightItem>
          <hr className="border-[#4a4948]" />
          <RightItem icon={<PaletteIcon />}><Key text="其他轮廓颜色" letter="M" tail="..." /></RightItem>
          <RightItem icon={<DropperIcon outline />}><Key text="取色器" letter="E" /></RightItem>
          <RightItem arrow icon={<BlockWeightIcon />}><Key text="粗细" letter="W" /></RightItem>
          <RightItem arrow active icon={<SketchIcon />}><Key text="草绘" letter="K" /></RightItem>
          <RightItem arrow icon={<DashIcon w={12} />}><Key text="虚线" letter="S" /></RightItem>
          <RightItem arrow disabled icon={<ArrowsIcon color="#9a9a9a" w={12} />}><Key text="箭头" letter="R" /></RightItem>
        </div>
        <div>
          <div className="h-[13px] w-[95px] bg-[#323130]" />
          <div className="h-[49px] w-20 overflow-hidden bg-[#323130]">
            <div className="flex h-7 items-end justify-end border-b border-[#444342] pb-px text-[9px]">艺术字</div>
          </div>
          <div className="h-[108px] w-20 border-b border-[#8a8a8a] bg-[#252525]" />
          <SketchMenu />
        </div>
      </div>
    </div>
  )
}

function RightWindow() {
  return (
    <article className="relative mr-[2px] flex min-w-0 flex-col bg-white shadow-[0_2px_2px_rgba(0,0,0,0.4)]">
      <header className="border-t border-black bg-[#323130]">
        <nav className="flex h-[19px] items-end pl-[11px]">
          <a href="#format" className="border-b-2 border-white pb-px text-[8px] leading-[13px] font-bold">
            形状格式
          </a>
        </nav>
        <div className="h-[2px]" />
        <RightRibbon />
        <div className="flex h-[17px] items-center gap-1 pl-[6px]">
          <button aria-label="合并形状" className="flex items-center gap-1">
            <Icon w={11} h={10}>
              <circle cx="4" cy="4" r="3.5" fill="#666" stroke="#a0a0a0" strokeWidth="0.8" />
              <circle cx="7" cy="6" r="3.5" fill="#777" fillOpacity="0.6" stroke="#a0a0a0" strokeWidth="0.8" />
            </Icon>
            <Chevron color="#6a6968" />
          </button>
          <button aria-label="自定义快速访问工具栏" className="pl-[8px]">
            <Icon w={6} h={5}>
              <path d="M.5.8h5" stroke="#c8c8c8" />
              <path d="M.8 2.2h4.4L3 4.5z" fill="#c8c8c8" />
            </Icon>
          </button>
        </div>
      </header>
      <div className="h-[91px] border-b border-[#8a8a8a] bg-[#252525]" />
      <main className="flex flex-1 justify-end pt-[59px] pr-[25px]">
        <SelectedShape />
      </main>
      <RightMenu />
      <RightPreview />
    </article>
  )
}

export default function App() {
  return (
    <div className="grid min-h-screen grid-cols-[557fr_18px_505fr] bg-white pt-[2px] pb-[6px] font-['Open_Sans','Noto_Sans_CJK_SC',sans-serif] text-[7px] leading-[10px] text-[#e6e6e6]">
      <LeftWindow />
      <div className="bg-black" />
      <RightWindow />
    </div>
  )
}
